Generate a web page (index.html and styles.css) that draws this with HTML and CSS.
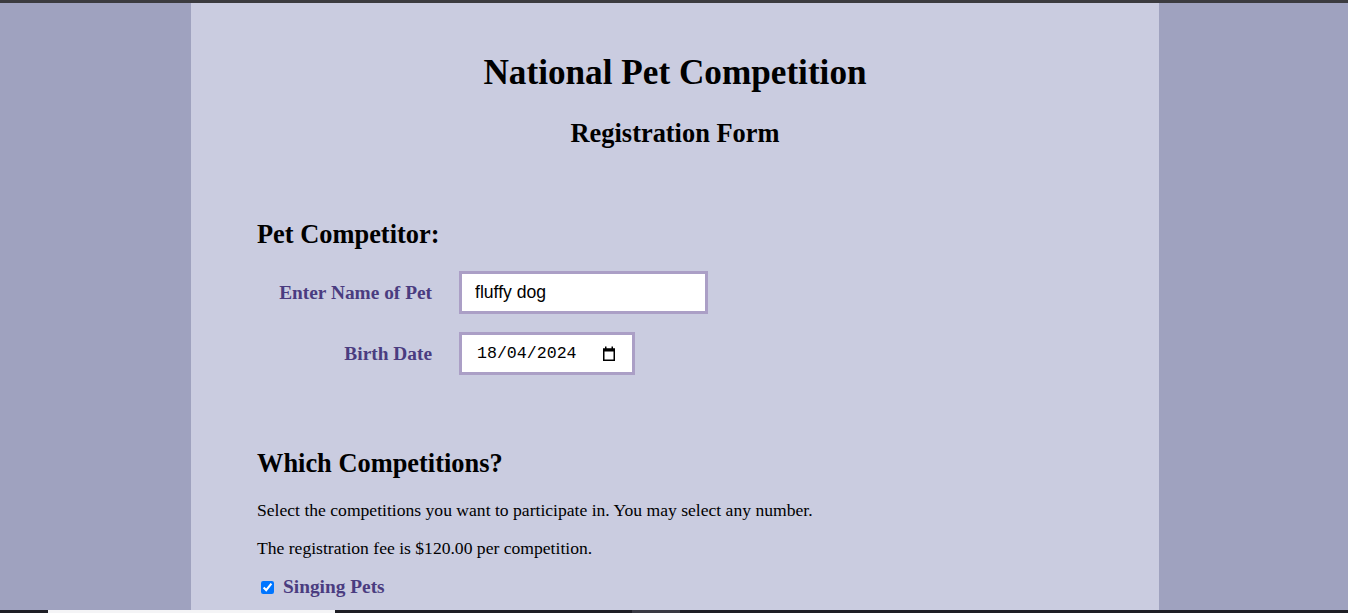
FILE: index.html
```html
<!DOCTYPE html>
<html lang="en-GB">
<head>
<meta charset="utf-8">
<title>National Pet Competition</title>
<link rel="stylesheet" href="styles.css">
</head>
<body>
<div class="topbar"></div>
<main class="page">
  <header class="masthead">
    <h1 class="title">National Pet Competition</h1>
    <h2 class="subtitle">Registration Form</h2>
  </header>
  <form class="form">
    <section class="section">
      <h2 class="section-title first">Pet Competitor:</h2>
      <div class="row">
        <label class="row-label" for="petname">Enter Name of Pet</label>
        <input class="field field-text" id="petname" type="text" value="fluffy dog">
      </div>
      <div class="row">
        <label class="row-label" for="birth">Birth Date</label>
        <div class="field field-date">
          <input class="date-text" id="birth" type="text" value="18/04/2024">
          <svg class="cal-icon" width="14" height="16" viewBox="0 0 14 16" aria-hidden="true">
            <rect x="1.75" y="3.25" width="10.5" height="11" fill="none" stroke="#000" stroke-width="1.5"/>
            <rect x="1" y="2.5" width="12" height="3" fill="#000"/>
            <rect x="3" y="0.5" width="1.5" height="3" fill="#000"/>
            <rect x="9.5" y="0.5" width="1.5" height="3" fill="#000"/>
          </svg>
        </div>
      </div>
    </section>
    <section class="section">
      <h2 class="section-title">Which Competitions?</h2>
      <p class="note first-note">Select the competitions you want to participate in. You may select any number.</p>
      <p class="note">The registration fee is $120.00 per competition.</p>
      <div class="check-row">
        <input class="check" id="singing" type="checkbox" checked>
        <label class="check-label" for="singing">Singing Pets</label>
      </div>
    </section>
  </form>
</main>
<div class="taskbar">
  <span class="tb tb-dark tb-a"></span>
  <span class="tb tb-white"></span>
  <span class="tb tb-dark tb-b"></span>
  <span class="tb tb-gray"></span>
  <span class="tb tb-dark tb-c"></span>
</div>
</body>
</html>
```
FILE: styles.css
```css
html, body {
  margin: 0;
  padding: 0;
}
body {
  background: #9fa2bf;
  font-family: "Liberation Serif", "Times New Roman", serif;
  font-size: 17.6px;
  color: #000;
  overflow: hidden;
}
.topbar {
  position: fixed;
  top: 0;
  left: 0;
  right: 0;
  height: 3px;
  background: #3b3b3f;
  z-index: 5;
}
.page {
  width: 968px;
  min-height: 100vh;
  margin: 0 0 0 191px;
  background: #cacce0;
  box-sizing: border-box;
  padding-top: 53px;
}
.masthead {
  text-align: center;
}
.title {
  font-size: 35.2px;
  font-weight: bold;
  margin: 0 0 24.5px;
}
.subtitle {
  font-size: 26.4px;
  font-weight: bold;
  margin: 0;
}
.form {
  padding: 0 66px;
}
.section-title {
  font-size: 26.4px;
  font-weight: bold;
  margin: 73px 0 0;
}
.section-title.first {
  margin-top: 70.6px;
  margin-bottom: 21px;
}
.row {
  display: flex;
  align-items: center;
  gap: 27px;
  margin-bottom: 18px;
}
.row:last-child {
  margin-bottom: 0;
}
.row-label {
  width: 175px;
  text-align: right;
  font-weight: bold;
  font-size: 19.36px;
  color: #4a3c80;
}
.field {
  box-sizing: border-box;
  border: 3px solid #ab9fc6;
  background: #fff;
  margin: 0;
  outline: none;
  border-radius: 0;
}
.field-text {
  width: 249px;
  height: 43px;
  padding: 0 13px;
  font-family: "Liberation Sans", Arial, sans-serif;
  font-size: 17.6px;
  color: #000;
}
.field-date {
  width: 176px;
  height: 43px;
  padding: 0 15px 0 15px;
  display: flex;
  align-items: center;
  justify-content: space-between;
}
.date-text {
  border: 0;
  padding: 0;
  margin: 0;
  outline: none;
  background: transparent;
  width: 104px;
  font-family: "Liberation Mono", "DejaVu Sans Mono", monospace;
  font-size: 16.6px;
  color: #000;
}
.cal-icon {
  display: block;
  margin-right: 1px;
}
.note {
  margin: 0 0 18px;
  line-height: 20.2px;
}
.first-note {
  margin-top: 20.6px;
}
.check-row {
  display: flex;
  align-items: center;
  margin-top: 4px;
}
.check {
  margin: 0 9px 0 4px;
  width: 13px;
  height: 13px;
}
.check-label {
  font-weight: bold;
  font-size: 19.36px;
  color: #4a3c80;
}
.taskbar {
  position: fixed;
  left: 0;
  right: 0;
  bottom: 0;
  height: 3px;
  display: flex;
  z-index: 5;
}
.tb {
  display: block;
  height: 3px;
}
.tb-dark {
  background: #1e1e24;
}
.tb-a { width: 48px; }
.tb-white { width: 287px; background: #f4f4f6; }
.tb-b { width: 297px; }
.tb-gray { width: 48px; background: #3a3a42; }
.tb-c { flex: 1; }
```
